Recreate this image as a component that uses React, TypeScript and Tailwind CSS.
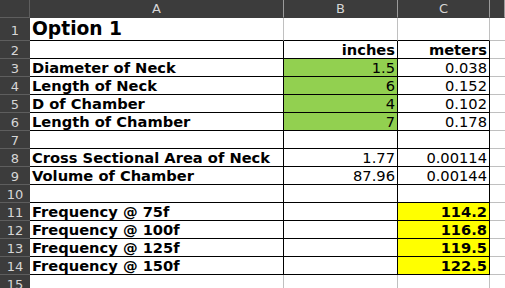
import React from "react";

type Cell = { v: string; bold?: boolean; align?: "l" | "r"; bg?: string; big?: boolean };

const rows: Cell[][] = [
  [{ v: "Option 1", bold: true, big: true }, { v: "" }, { v: "" }],
  [{ v: "" }, { v: "inches", bold: true, align: "r" }, { v: "meters", bold: true, align: "r" }],
  [{ v: "Diameter of Neck", bold: true }, { v: "1.5", align: "r", bg: "g" }, { v: "0.038", align: "r" }],
  [{ v: "Length of Neck", bold: true }, { v: "6", align: "r", bg: "g" }, { v: "0.152", align: "r" }],
  [{ v: "D of Chamber", bold: true }, { v: "4", align: "r", bg: "g" }, { v: "0.102", align: "r" }],
  [{ v: "Length of Chamber", bold: true }, { v: "7", align: "r", bg: "g" }, { v: "0.178", align: "r" }],
  [{ v: "" }, { v: "" }, { v: "" }],
  [{ v: "Cross Sectional Area of Neck", bold: true }, { v: "1.77", align: "r" }, { v: "0.00114", align: "r" }],
  [{ v: "Volume of Chamber", bold: true }, { v: "87.96", align: "r" }, { v: "0.00144", align: "r" }],
  [{ v: "" }, { v: "" }, { v: "" }],
  [{ v: "Frequency @ 75f", bold: true }, { v: "" }, { v: "114.2", bold: true, align: "r", bg: "y" }],
  [{ v: "Frequency @ 100f", bold: true }, { v: "" }, { v: "116.8", bold: true, align: "r", bg: "y" }],
  [{ v: "Frequency @ 125f", bold: true }, { v: "" }, { v: "119.5", bold: true, align: "r", bg: "y" }],
  [{ v: "Frequency @ 150f", bold: true }, { v: "" }, { v: "122.5", bold: true, align: "r", bg: "y" }],
  [{ v: "" }, { v: "" }, { v: "" }],
];

export default function App() {
  return (
    <div
      className="w-[505px] h-[288px] overflow-hidden bg-white"
      style={{ fontFamily: '"DejaVu Sans", sans-serif' }}
    >
      <div className="grid grid-cols-[30px_254px_114px_92px_15px]">
        {/* header row */}
        <div className="h-[18px] bg-[#3c3c3c] border-r border-b border-[#5e5e5e]" />
        {["A", "B", "C", ""].map((l, i) => (
          <div
            key={i}
            className="h-[18px] bg-[#3c3c3c] border-r border-b border-r-[#9a9a9a] border-b-[#3c3c3c] flex items-center justify-center text-[13px] leading-none text-[#d6d6d6]"
          >
            {l}
          </div>
        ))}
        {rows.map((r, ri) => {
          const rn = ri + 1;
          const h = rn === 1 ? "h-[23px]" : "h-[18px]";
          return (
            <React.Fragment key={ri}>
              <div
                className={`${h} bg-[#3c3c3c] border-b border-[#5e5e5e] flex items-center justify-center text-[13px] leading-none text-[#d6d6d6] pt-[2px]`}
              >
                {rn}
              </div>
              {r.map((c, ci) => {
                const inTable = rn >= 1 && rn <= 14;
                const bBlack = inTable;
                const rBlack = rn >= 2 && rn <= 14;
                const bg = c.bg === "g" ? "bg-[#92d050]" : c.bg === "y" ? "bg-[#ffff00]" : "bg-white";
                return (
                  <div
                    key={ci}
                    className={`${h} ${bg} border-r border-b ${rBlack ? "border-r-black" : "border-r-[#c0c0c0]"} ${bBlack ? "border-b-black" : "border-b-[#c0c0c0]"} flex items-end ${c.align === "r" ? "justify-end pr-[2px]" : "justify-start pl-[2px]"} overflow-hidden whitespace-nowrap text-black ${c.bold ? "font-bold" : "font-normal"} ${c.big ? "text-[18.67px] leading-[22px]" : "text-[14.67px] leading-[17px]"}`}
                  >
                    {c.v}
                  </div>
                );
              })}
              <div className={`${h} bg-white border-b border-[#c0c0c0]`} />
            </React.Fragment>
          );
        })}
      </div>
    </div>
  );
}
